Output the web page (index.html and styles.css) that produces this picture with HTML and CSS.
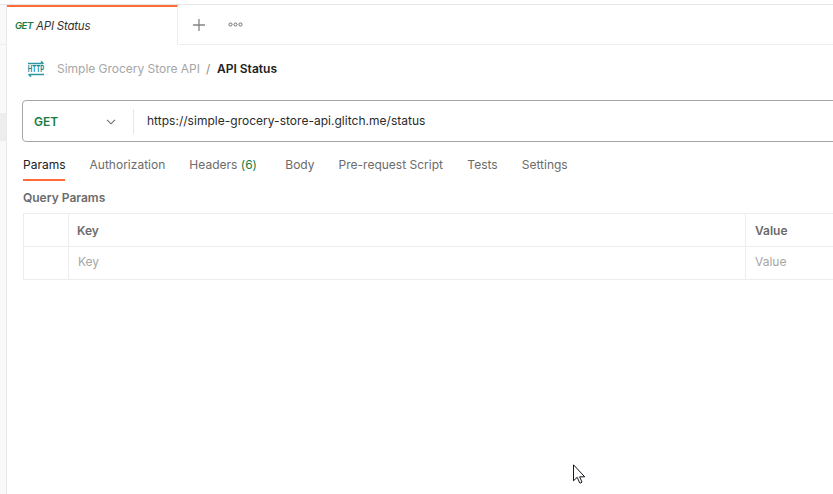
FILE: index.html
```html
<!DOCTYPE html>
<html lang="en">
<head>
<meta charset="utf-8">
<title>API Status</title>
<link rel="stylesheet" href="styles.css">
</head>
<body>
<div class="app">
  <aside class="sidebar">
    <div class="sidebar-head"></div>
    <div class="sidebar-selected"></div>
  </aside>
  <main class="workspace">
    <header class="tabs">
      <div class="tab"><span class="tab-method">GET</span><span class="tab-name">API Status</span></div>
      <div class="tab-actions">
        <svg class="plus" width="12" height="12" viewBox="0 0 12 12"><path d="M6 0v12M0 6h12"/></svg>
        <svg class="more" width="15" height="5" viewBox="0 0 15 5"><circle cx="2.5" cy="2.5" r="1.55"/><circle cx="7.5" cy="2.5" r="1.55"/><circle cx="12.5" cy="2.5" r="1.55"/></svg>
      </div>
    </header>
    <nav class="breadcrumb">
      <svg class="http" width="16" height="16" viewBox="0 0 16 16"><path d="M0 2.500h15.300M13 .400l2.500 2.300M16 13.500H.7M3 15.600L.5 13.300"/><text x="-.2" y="11.300" textLength="16.400" lengthAdjust="spacingAndGlyphs">HTTP</text></svg>
      <span class="crumb">Simple Grocery Store API</span><span class="slash">/</span><span class="current">API Status</span>
    </nav>
    <div class="url-bar">
      <div class="method"><span>GET</span><svg width="10" height="6" viewBox="0 0 10 6"><path d="M1 .8l4 4 4-4"/></svg></div>
      <div class="url">https://simple-grocery-store-api.glitch.me/status</div>
    </div>
    <nav class="sections">
      <span class="section active">Params</span>
      <span class="section authorization">Authorization</span>
      <span class="section headers">Headers <b>(6)</b></span>
      <span class="section body">Body</span>
      <span class="section script">Pre-request Script</span>
      <span class="section tests">Tests</span>
      <span class="section">Settings</span>
    </nav>
    <h2 class="title">Query Params</h2>
    <div class="table">
      <div class="cell"></div><div class="cell head">Key</div><div class="cell head">Value</div>
      <div class="cell"></div><div class="cell hint">Key</div><div class="cell hint">Value</div>
    </div>
  </main>
</div>
<svg class="cursor" width="13" height="21" viewBox="0 0 13 21"><path d="M.5.8v16l3.700-3.500 2.500 5.600q1.300.7 2.300-.9l-2.400-5.200h5.100z"/></svg>
</body>
</html>
```
FILE: styles.css
```css
* { box-sizing: border-box; }
body {
  margin: 0;
  width: 833px;
  height: 494px;
  overflow: hidden;
  background: #fff;
  font: 12px/16px Inter, "Liberation Sans", sans-serif;
  color: #212121;
}
svg { display: block; fill: none; flex: none; }
.app {
  display: flex;
  height: 490px;
  margin-top: 4px;
  border-top: 1px solid #e6e6e6;
}
.sidebar {
  width: 7px;
  flex: none;
  background: #f9f9f9;
  border-right: 1px solid #e9e9e9;
}
.sidebar-head { height: 40px; border-bottom: 1px solid #ededed; }
.sidebar-selected { height: 28px; margin-top: 68px; background: #ededed; }
.workspace { flex: 1; min-width: 0; overflow: hidden; }
.tabs { display: flex; height: 40px; }
.tab {
  display: flex;
  width: 171px;
  padding: 11px 0 0 8px;
  border-top: 2px solid #ff6c37;
  border-right: 1px solid #ededed;
  font-style: italic;
  white-space: nowrap;
}
.tab-method { width: 21px; font-size: 9.500px; font-weight: 600; letter-spacing: -.5px; color: #1a7a42; }
.tab-name { font-size: 11.500px; letter-spacing: -.2px; color: #333; }
.tab-actions {
  display: flex;
  flex: 1;
  align-items: center;
  gap: 22.500px;
  margin-left: 1px;
  padding-left: 14px;
  border-bottom: 1px solid #ededed;
}
.plus { stroke: #858585; stroke-width: 1.300; }
.more { stroke: #6b6b6b; stroke-width: 1; }
.breadcrumb { display: flex; height: 55px; padding: 16px 0 0 21px; white-space: nowrap; }
.http { overflow: visible; stroke: #2f96a5; stroke-width: 1.500; }
.http text { fill: #0b8799; stroke: none; font: 700 9px Inter, sans-serif; }
.crumb { width: 149px; margin-left: 13px; letter-spacing: -.02px; color: #a6a6a6; }
.slash { width: 11px; color: #8c8c8c; }
.current { font-weight: 600; }
.url-bar {
  display: flex;
  align-items: center;
  width: 840px;
  height: 42px;
  margin-left: 15px;
  border: 1px solid #a6a6a6;
  border-radius: 4px;
}
.method {
  display: flex;
  align-items: center;
  justify-content: space-between;
  width: 111px;
  height: 25px;
  padding: 1px 17px 0 11px;
  border-right: 1px solid #e6e6e6;
  color: #1a7a42;
  font-weight: 600;
}
.method svg { stroke: #6b6b6b; stroke-width: 1.100; }
.url { padding-left: 13px; letter-spacing: .02px; color: #2b2b2b; }
.sections { display: flex; height: 39px; margin-left: 16px; padding-top: 15px; color: #6b6b6b; white-space: nowrap; }
.section { height: 24px; margin-right: 24px; letter-spacing: .01px; }
.active { width: 42px; margin-right: 24.500px; letter-spacing: 0; color: #212121; border-bottom: 2px solid #ff6c37; }
.headers { margin-right: 28.300px; }
.headers b { font-weight: 400; color: #1a7a42; }
.script { margin-right: 24.300px; }
.title { margin: 9px 0 7px 16px; font-size: 12px; line-height: 16px; font-weight: 600; color: #6b6b6b; }
.table {
  display: grid;
  grid-template-columns: 45px 677px 110px;
  grid-template-rows: 33px 33px;
  width: 833px;
  margin-left: 16px;
  border-top: 1px solid #ededed;
  border-left: 1px solid #ededed;
}
.cell { padding: 9px 0 0 8px; border-right: 1px solid #ededed; border-bottom: 1px solid #ededed; }
.head { font-weight: 600; color: #6b6b6b; }
.hint { padding: 7px 0 0 9px; color: #a6a6a6; }
.cell:nth-child(3n) { padding-left: 9px; }
.cursor { position: absolute; left: 573px; top: 464px; fill: #fff; stroke: #15151f; stroke-width: 1; }
```
